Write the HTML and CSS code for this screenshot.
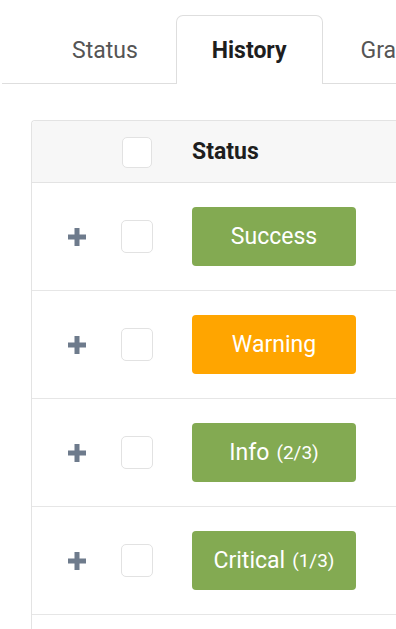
FILE: index.html
```html
<!DOCTYPE html>
<html>
<head>
<meta charset="utf-8">
<link rel="stylesheet" href="styles.css">
</head>
<body>
<div class="tabs">
  <div class="tab">Status</div>
  <div class="tab active">History</div>
  <div class="tab">Graph</div>
</div>
<div class="table">
  <div class="head">
    <div class="cell-plus"></div>
    <div class="cell-check"><span class="check check-head"></span></div>
    <div class="head-title">Status</div>
  </div>
  <div class="row">
    <div class="cell-plus"><svg class="plus" width="18" height="18" viewBox="0 0 18 18"><rect x="6.5" y="0" width="5" height="18"/><rect x="0" y="6.5" width="18" height="5"/></svg></div>
    <div class="cell-check"><span class="check"></span></div>
    <div class="badge green">Success</div>
  </div>
  <div class="row">
    <div class="cell-plus"><svg class="plus" width="18" height="18" viewBox="0 0 18 18"><rect x="6.5" y="0" width="5" height="18"/><rect x="0" y="6.5" width="18" height="5"/></svg></div>
    <div class="cell-check"><span class="check"></span></div>
    <div class="badge orange">Warning</div>
  </div>
  <div class="row">
    <div class="cell-plus"><svg class="plus" width="18" height="18" viewBox="0 0 18 18"><rect x="6.5" y="0" width="5" height="18"/><rect x="0" y="6.5" width="18" height="5"/></svg></div>
    <div class="cell-check"><span class="check"></span></div>
    <div class="badge green">Info<span class="count">(2/3)</span></div>
  </div>
  <div class="row">
    <div class="cell-plus"><svg class="plus" width="18" height="18" viewBox="0 0 18 18"><rect x="6.5" y="0" width="5" height="18"/><rect x="0" y="6.5" width="18" height="5"/></svg></div>
    <div class="cell-check"><span class="check"></span></div>
    <div class="badge green">Critical<span class="count">(1/3)</span></div>
  </div>
</div>
</body>
</html>
```
FILE: styles.css
```css
html, body {
  margin: 0;
  padding: 0;
  background: #fff;
  overflow: hidden;
}
body {
  font-family: Roboto, "Liberation Sans", sans-serif;
  width: 396px;
  height: 629px;
}
.tabs {
  display: flex;
  margin-left: 2px;
  padding-left: 32px;
  padding-top: 15px;
  height: 68px;
  border-bottom: 1px solid #dedede;
  width: 600px;
}
.tab {
  box-sizing: border-box;
  height: 69px;
  padding: 0 37px 0 37px;
  display: flex;
  align-items: center;
  font-size: 23px;
  color: #555;
  border: 1px solid transparent;
  border-bottom: none;
  white-space: nowrap;
}
.tab.active {
  color: #1e1e1e;
  font-weight: 700;
  padding: 0 35px 0 35px;
  border-color: #dedede;
  border-radius: 7px 7px 0 0;
  background: #fff;
  position: relative;
  z-index: 1;
}
.table {
  margin-top: 36px;
  margin-left: 31px;
  width: 600px;
  border-left: 1px solid #e3e3e3;
  border-top: 1px solid #e3e3e3;
  border-top-left-radius: 4px;
  min-height: 520px;
}
.head {
  display: flex;
  align-items: center;
  height: 61px;
  background: #f7f7f7;
  border-bottom: 1px solid #e3e3e3;
  border-top-left-radius: 4px;
}
.row {
  display: flex;
  align-items: center;
  height: 107px;
  border-bottom: 1px solid #e6e6e6;
}
.cell-plus {
  width: 89px;
  display: flex;
  justify-content: center;
  align-items: center;
}
.plus {
  fill: #6e7b8c;
  display: block;
}
.cell-check {
  width: 32px;
  display: flex;
  justify-content: center;
  margin-right: 39px;
}
.check {
  display: block;
  box-sizing: border-box;
  width: 32px;
  height: 33px;
  border: 1px solid #e2e2e2;
  border-radius: 5px;
  background: #fff;
}
.check-head {
  width: 30px;
  height: 31px;
  margin-top: 1px;
}
.head-title {
  font-size: 23px;
  font-weight: 700;
  color: #1e1e1e;
}
.badge {
  width: 164px;
  height: 59px;
  border-radius: 4px;
  display: flex;
  align-items: center;
  justify-content: center;
  color: #fff;
  font-size: 23px;
}
.green {
  background: #83aa52;
}
.orange {
  background: #ffa500;
}
.count {
  font-size: 19px;
  margin-left: 7px;
}
```
